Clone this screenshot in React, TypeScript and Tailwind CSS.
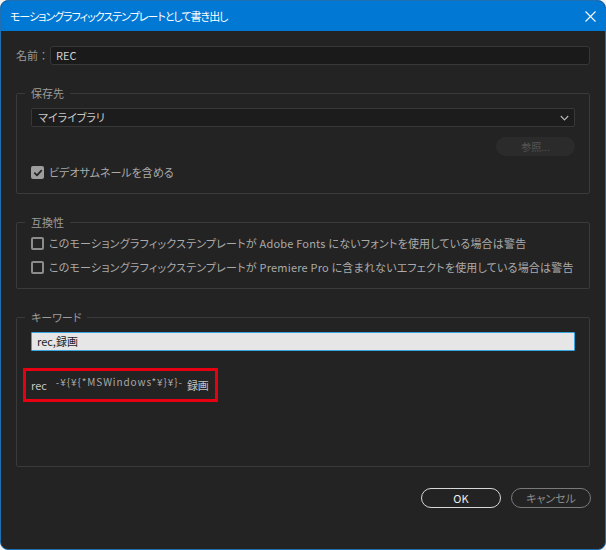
import React from 'react';

const CheckBox: React.FC<{ checked?: boolean }> = ({ checked }) =>
  checked ? (
    <span className="w-[13px] h-[13px] shrink-0 rounded-[2px] bg-[#9e9e9e] flex items-center justify-center">
      <svg width="10" height="10" viewBox="0 0 10 10" fill="none" stroke="#262626" strokeWidth="1.8" strokeLinecap="round" strokeLinejoin="round">
        <path d="M1.8 5.2 L4 7.4 L8.3 2.6" />
      </svg>
    </span>
  ) : (
    <span className="w-[13px] h-[13px] shrink-0 rounded-[2px] border-2 border-[#8c8c8c]" />
  );

const Group: React.FC<{ title: string; className?: string; children: React.ReactNode }> = ({ title, className = '', children }) => (
  <fieldset className={`border border-[#3a3a3a] rounded-[2px] pl-[8px] ${className}`}>
    <legend className="px-[6px] text-[11px] leading-[14px] text-[#9c9c9c]">{title}</legend>
    <div className="pl-[6px] pr-[14px]">{children}</div>
  </fieldset>
);

export default function App() {
  return (
    <div className="w-[606px] h-[550px] bg-[#f3f3f3] font-['Noto_Sans_CJK_JP',sans-serif] [font-feature-settings:'palt']">
      <div className="h-full flex flex-col rounded-[8px] overflow-hidden border border-[#1f6fb2] bg-[#232323]">
        {/* Title bar */}
        <div className="h-[30px] shrink-0 bg-[#0078d4] flex items-center justify-between pl-[9px] pr-[5px]">
          <span className="text-[11px] tracking-[-1px] text-white leading-none">モーショングラフィックステンプレートとして書き出し</span>
          <span className="w-[20px] h-[20px] flex items-center justify-center">
            <svg width="11" height="11" viewBox="0 0 11 11" stroke="#ffffff" strokeWidth="1.1">
              <line x1="0.5" y1="0.5" x2="10.5" y2="10.5" />
              <line x1="10.5" y1="0.5" x2="0.5" y2="10.5" />
            </svg>
          </span>
        </div>

        <div className="flex-1 flex flex-col pl-[15px] pr-[15px]">
          {/* Name */}
          <div className="mt-[15px] flex items-center h-[19px]">
            <span className="w-[34px] shrink-0 text-[11px] text-[#9a9a9a] [font-feature-settings:normal]">名前：</span>
            <div className="flex-1 h-full bg-[#1a1a1a] border border-[#383838] rounded-[3px] flex items-center pl-[5px] text-[11px] text-[#d2d2d2]">
              REC
            </div>
          </div>

          {/* 保存先 */}
          <Group title="保存先" className="mt-[21px]">
            <div className="mt-[8px] h-[19px] bg-[#1c1c1c] border border-[#383838] rounded-[2px] flex items-center justify-between pl-[6px] pr-[5px] text-[11px] text-[#c8c8c8]">
              <span>マイライブラリ</span>
              <svg width="9" height="6" viewBox="0 0 9 6" fill="none" stroke="#b4b4b4" strokeWidth="1.2">
                <path d="M0.8 1 L4.5 4.8 L8.2 1" />
              </svg>
            </div>
            <div className="mt-[10px] flex justify-end">
              <span className="w-[79px] h-[19px] rounded-full bg-[#2b2b2b] flex items-center justify-center text-[10px] text-[#555555]">参照...</span>
            </div>
            <div className="mt-[10px] mb-[14px] flex items-center gap-[5px] h-[13px]">
              <CheckBox checked />
              <span className="text-[11px] text-[#aaaaaa]">ビデオサムネールを含める</span>
            </div>
          </Group>

          {/* 互換性 */}
          <Group title="互換性" className="mt-[21px]">
            <div className="mt-[6px] mb-[13px] flex flex-col gap-[8px]">
              <div className="flex items-center gap-[5px] h-[16px]">
                <CheckBox />
                <span className="text-[11px] text-[#aaaaaa] whitespace-nowrap tracking-[0.2px]">このモーショングラフィックステンプレートが Adobe Fonts にないフォントを使用している場合は警告</span>
              </div>
              <div className="flex items-center gap-[5px] h-[16px]">
                <CheckBox />
                <span className="text-[11px] text-[#aaaaaa] whitespace-nowrap tracking-[0.2px]">このモーショングラフィックステンプレートが Premiere Pro に含まれないエフェクトを使用している場合は警告</span>
              </div>
            </div>
          </Group>

          {/* キーワード */}
          <Group title="キーワード" className="mt-[21px] h-[157px]">
            <div className="mt-[8px] h-[19px] bg-[#e6e6e6] border border-[#35a6e0] rounded-[1px] flex items-center pl-[5px] text-[11px] text-[#1e1e1e]">
              rec,録画
            </div>
            <div className="mt-[17px] -ml-[8px] w-[195px] h-[34px] border-[3px] border-[#e60012] flex items-center pl-[5px] text-[#c4c4c4]">
              <span className="text-[11px]">rec</span>
              <span className="ml-[9px] mb-[8px] text-[10px] tracking-[0.9px] text-[#a8a8a8] [font-feature-settings:normal]">-¥{'{'}¥{'{'}*MSWindows*¥{'}'}¥{'}'}-</span>
              <span className="ml-[4px] text-[11px]">録画</span>
            </div>
          </Group>

          {/* Buttons */}
          <div className="mt-[21px] flex justify-end gap-[10px] -mr-[1px]">
            <span className="w-[80px] h-[20px] rounded-full border-[1.5px] border-[#d8d8d8] flex items-center justify-center text-[11px] text-[#f0f0f0]">OK</span>
            <span className="w-[80px] h-[20px] rounded-full border-[1.5px] border-[#7a7a7a] flex items-center justify-center text-[11px] text-[#8c8c8c]">キャンセル</span>
          </div>
        </div>
      </div>
    </div>
  );
}
